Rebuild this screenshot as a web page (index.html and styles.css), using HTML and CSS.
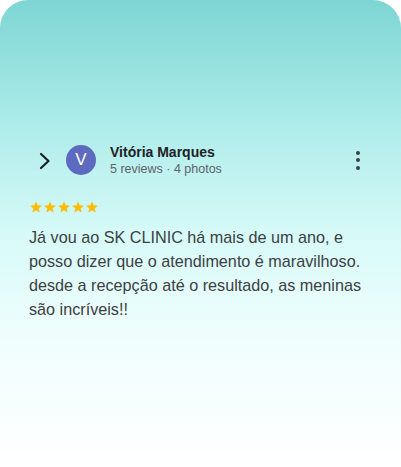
FILE: index.html
```html
<!DOCTYPE html>
<html lang="pt">
<head>
    <meta charset="UTF-8">
    <meta name="viewport" content="width=device-width, initial-scale=1.0">
    <title>Avaliação - SK Clinic</title>
    <link rel="stylesheet" href="styles.css">
</head>
<body>
    <div class="card">
        <div class="review-head">
            <svg class="chevron" width="12" height="18" viewBox="0 0 12 18">
                <path d="M2 2 L9.5 9 L2 16" fill="none" stroke="#202124" stroke-width="2.2" stroke-linecap="round" stroke-linejoin="round"/>
            </svg>
            <div class="avatar">V</div>
            <div class="author">
                <div class="author-name">Vitória Marques</div>
                <div class="author-meta">5 reviews · 4 photos</div>
            </div>
            <div class="more">
                <span></span><span></span><span></span>
            </div>
        </div>

        <div class="stars">
            <svg viewBox="0 0 24 24"><path d="M12 2.5l2.9 6.6 7.1.6-5.4 4.7 1.6 7-6.2-3.7-6.2 3.7 1.6-7L2 9.7l7.1-.6z"/></svg>
            <svg viewBox="0 0 24 24"><path d="M12 2.5l2.9 6.6 7.1.6-5.4 4.7 1.6 7-6.2-3.7-6.2 3.7 1.6-7L2 9.7l7.1-.6z"/></svg>
            <svg viewBox="0 0 24 24"><path d="M12 2.5l2.9 6.6 7.1.6-5.4 4.7 1.6 7-6.2-3.7-6.2 3.7 1.6-7L2 9.7l7.1-.6z"/></svg>
            <svg viewBox="0 0 24 24"><path d="M12 2.5l2.9 6.6 7.1.6-5.4 4.7 1.6 7-6.2-3.7-6.2 3.7 1.6-7L2 9.7l7.1-.6z"/></svg>
            <svg viewBox="0 0 24 24"><path d="M12 2.5l2.9 6.6 7.1.6-5.4 4.7 1.6 7-6.2-3.7-6.2 3.7 1.6-7L2 9.7l7.1-.6z"/></svg>
        </div>

        <p class="review-text">Já vou ao SK CLINIC há mais de um ano, e posso dizer que o atendimento é maravilhoso. desde a recepção até o resultado, as meninas são incríveis!!</p>
    </div>
</body>
</html>
```

FILE: styles.css
```css
body {
    margin: 0;
    background: #ffffff;
    font-family: "Liberation Sans", Arial, sans-serif;
}
.card {
    height: 467px;
    box-sizing: border-box;
    padding: 143px 38px 0 29px;
    border-radius: 28px 28px 0 0;
    background: linear-gradient(to bottom, #7dd6d4 0%, #b3eeec 30%, #d6faf8 50%, #effefd 72%, #ffffff 100%);
}
.review-head {
    display: flex;
    align-items: center;
    height: 34px;
    padding-left: 10px;
    padding-right: 3px;
}
.chevron {
    display: block;
    margin-top: 1px;
}
.avatar {
    width: 30px;
    height: 30px;
    margin-left: 15px;
    border-radius: 50%;
    background: #5c6bc0;
    color: #ffffff;
    font-size: 17px;
    line-height: 30px;
    text-align: center;
}
.author {
    flex: 1;
    margin-left: 14px;
}
.author-name {
    font-size: 14px;
    font-weight: bold;
    color: #202124;
    line-height: 17px;
}
.author-meta {
    font-size: 12.5px;
    color: #5f6368;
    line-height: 16px;
}
.more {
    display: flex;
    flex-direction: column;
    gap: 3.5px;
}
.more span {
    width: 4px;
    height: 4px;
    border-radius: 50%;
    background: #3c4043;
}
.stars {
    display: flex;
    margin-top: 23px;
}
.stars svg {
    width: 14px;
    height: 14px;
    fill: #fbbc04;
}
.review-text {
    margin: 11px 0 0 0;
    font-size: 16.2px;
    line-height: 24px;
    color: #3c4043;
}
```
